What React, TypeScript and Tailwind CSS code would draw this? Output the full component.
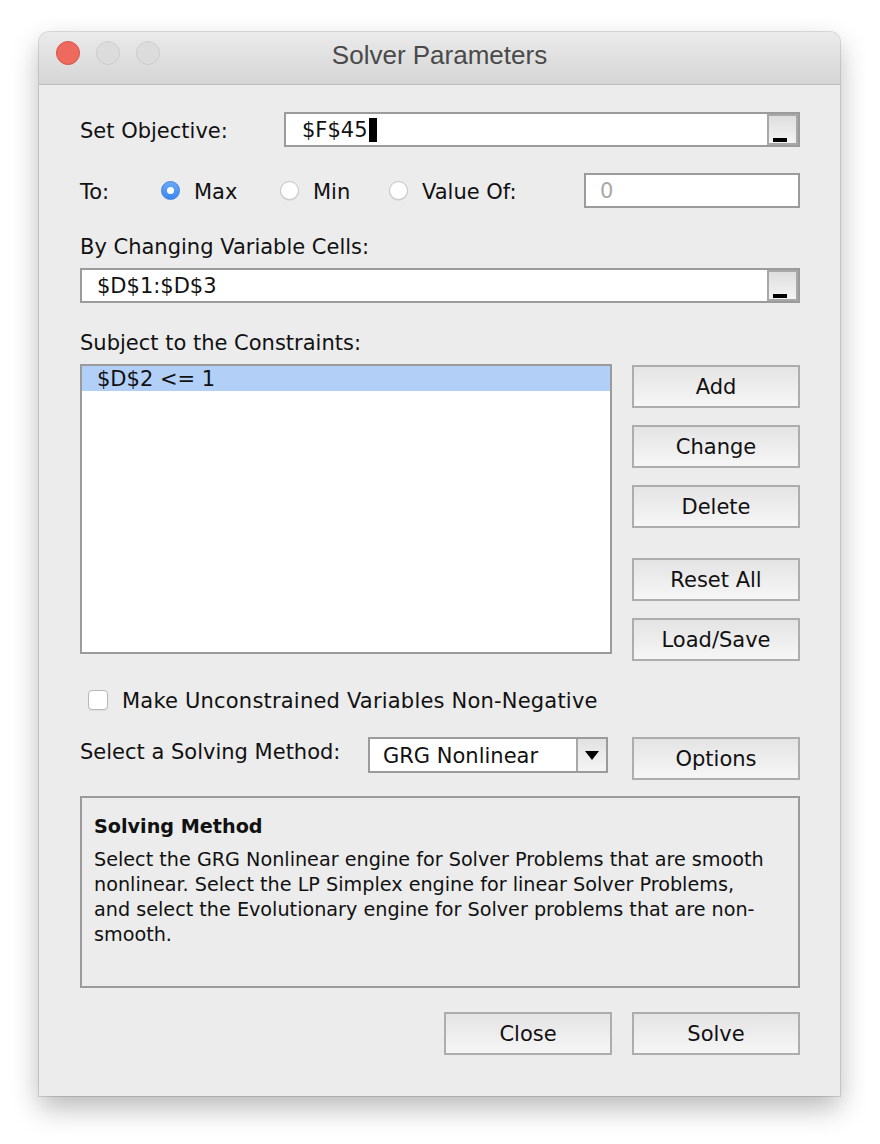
import React from "react"

const font = { fontFamily: '"DejaVu Sans", "Liberation Sans", sans-serif' }

function MacButton({ label, className = "" }: { label: string; className?: string }) {
  return (
    <div
      className={`flex items-center justify-center pt-[2px] w-[168px] h-[43px] border-2 border-[#adadad] bg-gradient-to-b from-[#e4e4e4] to-[#f6f6f6] text-[21px] text-[#111] ${className}`}
    >
      {label}
    </div>
  )
}

function PickerButton() {
  // the little "_" range picker at the right end of a cell field
  return (
    <div className="relative w-[31px] h-full bg-gradient-to-b from-[#dedede] to-[#f4f4f4] border-2 border-[#a8a8a8]">
      <div className="absolute left-[4px] bottom-[1px] w-[14px] h-[4px] bg-black" />
    </div>
  )
}

function Radio({ checked }: { checked?: boolean }) {
  if (checked) {
    return (
      <div className="w-[19px] h-[19px] rounded-full bg-gradient-to-b from-[#6aa9f7] to-[#3b86ef] border border-[#3f83e0] flex items-center justify-center">
        <div className="w-[7px] h-[7px] rounded-full bg-white" />
      </div>
    )
  }
  return <div className="w-[19px] h-[19px] rounded-full bg-white border border-[#c4c4c4] shadow-[0_1px_1px_rgba(0,0,0,0.08)]" />
}

export default function App() {
  return (
    <div className="w-[880px] h-[1144px] bg-white pt-[32px] pl-[39px]" style={font}>
      <div className="w-[801px] h-[1064px] rounded-t-[10px] bg-[#ececec] shadow-[0_12px_28px_rgba(0,0,0,0.28),0_0_0_1px_rgba(0,0,0,0.12)] flex flex-col overflow-hidden">
        {/* Title bar */}
        <div className="relative h-[53px] shrink-0 bg-gradient-to-b from-[#ebebeb] to-[#d5d5d5] border-b border-[#bdbdbd] flex items-center justify-center pb-[6px]">
          <div className="absolute left-[17px] top-[9px] flex gap-[16px]">
            <div className="w-[24px] h-[24px] rounded-full bg-[#ee6a5e] border border-[#d65347]" />
            <div className="w-[24px] h-[24px] rounded-full bg-[#dcdcdc] border border-[#cccccc]" />
            <div className="w-[24px] h-[24px] rounded-full bg-[#dcdcdc] border border-[#cccccc]" />
          </div>
          <span className="text-[26px] text-[#4a4a4a]" style={{ fontFamily: '"Liberation Sans", Arial, sans-serif' }}>
            Solver Parameters
          </span>
        </div>

        {/* Body */}
        <div className="flex flex-col pl-[41px] pr-[40px] text-[21px] text-[#111]">
          {/* Set Objective */}
          <div className="mt-[27px] h-[35px] flex items-center">
            <span className="w-[204px] pt-[4px]">Set Objective:</span>
            <div className="flex-1 h-full flex border-2 border-[#9b9b9b] bg-white">
              <div className="flex-1 flex items-center pl-[16px]">
                <span className="pt-[3px]">$F$45</span>
                <span className="ml-[1px] w-[8px] h-[24px] bg-black" />
              </div>
              <PickerButton />
            </div>
          </div>

          {/* To */}
          <div className="mt-[26px] h-[35px] flex items-center">
            <span className="w-[81px] pt-[4px]">To:</span>
            <div className="w-[119px] flex items-center gap-[14px]">
              <Radio checked />
              <span className="pt-[4px]">Max</span>
            </div>
            <div className="w-[109px] flex items-center gap-[14px]">
              <Radio />
              <span className="pt-[4px]">Min</span>
            </div>
            <div className="flex items-center gap-[14px]">
              <Radio />
              <span className="pt-[4px]">Value Of:</span>
            </div>
            <div className="ml-auto w-[216px] h-full border-2 border-[#9b9b9b] bg-white flex items-center pl-[14px] pt-[3px] text-[#a9a9a9]">
              0
            </div>
          </div>

          {/* By Changing Variable Cells */}
          <div className="mt-[26px] h-[24px] flex items-center pt-[4px]">By Changing Variable Cells:</div>
          <div className="mt-[10px] h-[35px] flex border-2 border-[#9b9b9b] bg-white">
            <div className="flex-1 flex items-center pl-[15px] pt-[3px]">$D$1:$D$3</div>
            <PickerButton />
          </div>

          {/* Constraints */}
          <div className="mt-[27px] h-[24px] flex items-center pt-[4px]">Subject to the Constraints:</div>
          <div className="mt-[10px] flex items-start">
            <div className="w-[532px] h-[290px] border-2 border-[#9b9b9b] bg-white">
              <div className="h-[25px] bg-[#b2cff7] flex items-center pl-[15px] pt-[2px]">$D$2 &lt;= 1</div>
            </div>
            <div className="ml-[20px] mt-[1px] flex flex-col">
              <MacButton label="Add" />
              <MacButton label="Change" className="mt-[17px]" />
              <MacButton label="Delete" className="mt-[17px]" />
              <MacButton label="Reset All" className="mt-[30px]" />
              <MacButton label="Load/Save" className="mt-[17px]" />
            </div>
          </div>

          {/* Non-negative */}
          <div className="mt-[27px] h-[24px] flex items-center">
            <div className="ml-[8px] w-[20px] h-[20px] rounded-[4px] bg-white border border-[#b8b8b8] shadow-[0_1px_1px_rgba(0,0,0,0.06)]" />
            <span className="ml-[14px] pt-[3px] tracking-[0.2px]">Make Unconstrained Variables Non-Negative</span>
          </div>

          {/* Solving method */}
          <div className="mt-[25px] h-[42px] flex items-start">
            <div className="w-[288px] h-[28px] flex items-center pt-[4px]">Select a Solving Method:</div>
            <div className="w-[240px] h-[36px] border-2 border-[#9b9b9b] bg-white flex">
              <div className="flex-1 flex items-center pl-[13px] pt-[3px]">GRG Nonlinear</div>
              <div className="w-[30px] h-full border-l-2 border-[#a8a8a8] bg-gradient-to-b from-[#e2e2e2] to-[#f4f4f4] flex items-center justify-center">
                <svg width="14" height="9" viewBox="0 0 14 9">
                  <path d="M0 0 H14 L7 9 Z" fill="#000" />
                </svg>
              </div>
            </div>
            <MacButton label="Options" className="ml-[24px] h-[42px]" />
          </div>

          {/* Description */}
          <div className="mt-[17px] h-[192px] border-2 border-[#9b9b9b] px-[12px] pt-[16px] text-[19.2px] leading-[25px]">
            <div className="font-bold mb-[8px]">Solving Method</div>
            <div>
              Select the GRG Nonlinear engine for Solver Problems that are smooth
              <br />
              nonlinear. Select the LP Simplex engine for linear Solver Problems,
              <br />
              and select the Evolutionary engine for Solver problems that are non-
              <br />
              smooth.
            </div>
          </div>

          {/* Footer buttons */}
          <div className="mt-[24px] flex justify-end gap-[20px]">
            <MacButton label="Close" />
            <MacButton label="Solve" />
          </div>
        </div>
      </div>
    </div>
  )
}
